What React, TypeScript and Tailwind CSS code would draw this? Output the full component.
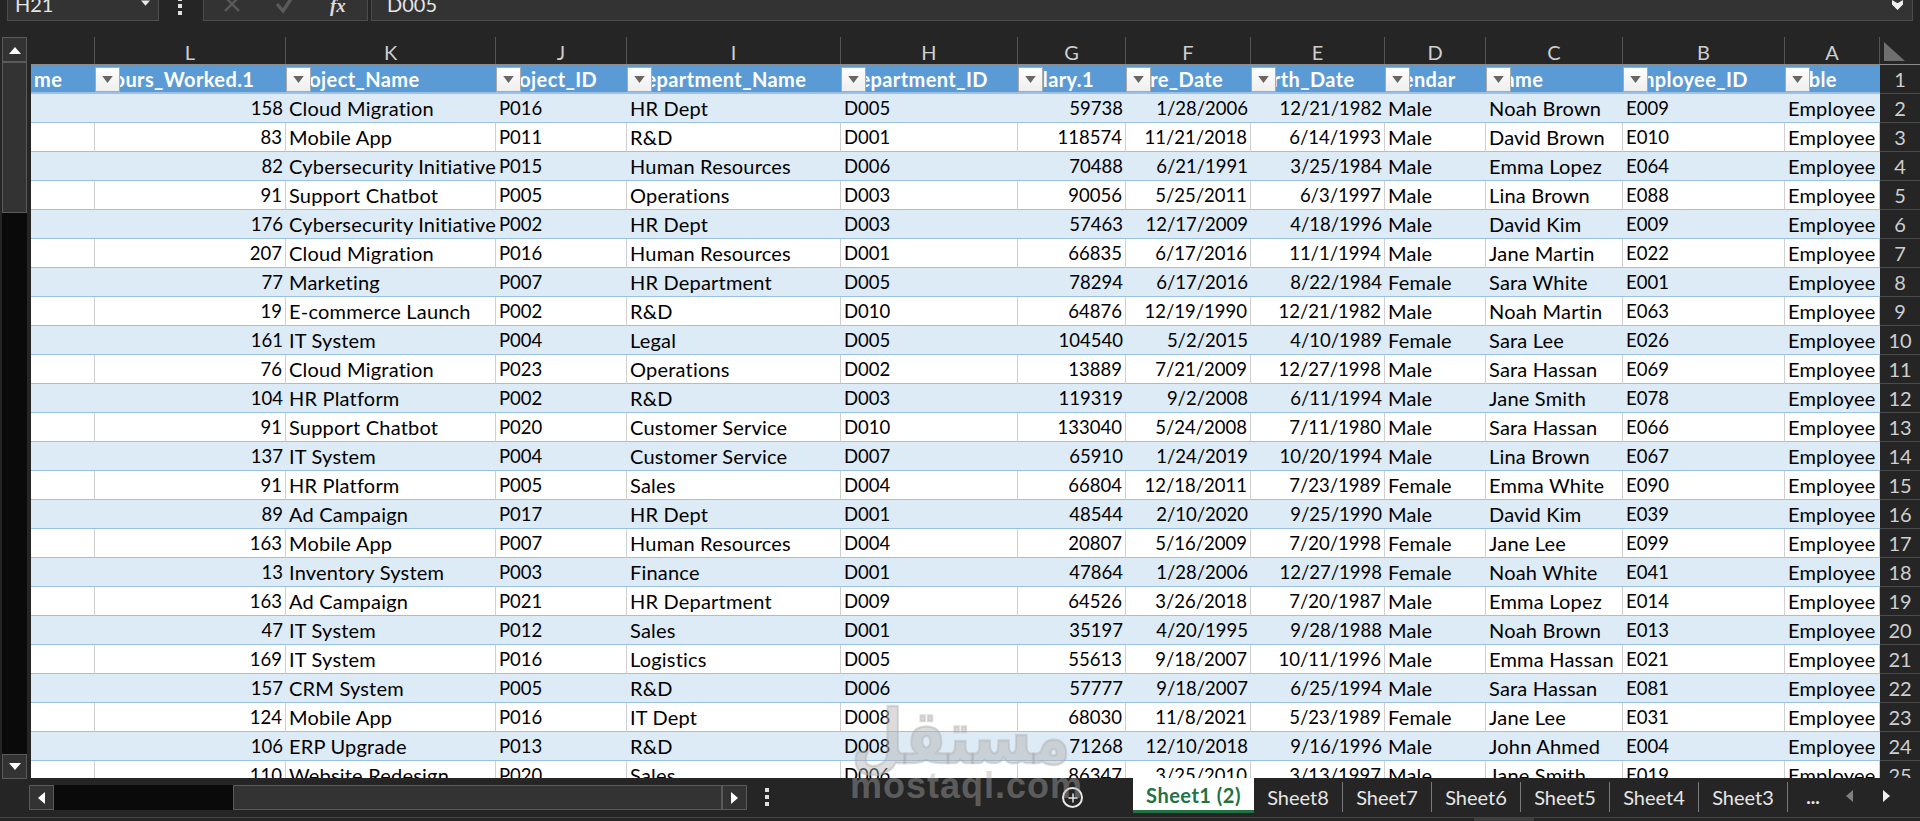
import { Plus } from "lucide-react";

const COLS = [
  { letter: "", title: "me", w: "w-[64px]", filter: false },
  { letter: "L", title: "Hours_Worked.1", w: "w-[191px]", filter: true },
  { letter: "K", title: "Project_Name", w: "w-[210px]", filter: true },
  { letter: "J", title: "Project_ID", w: "w-[131px]", filter: true },
  { letter: "I", title: "Department_Name", w: "w-[214px]", filter: true },
  { letter: "H", title: "Department_ID", w: "w-[177px]", filter: true },
  { letter: "G", title: "Salary.1", w: "w-[108px]", filter: true },
  { letter: "F", title: "Hire_Date", w: "w-[125px]", filter: true },
  { letter: "E", title: "Birth_Date", w: "w-[134px]", filter: true },
  { letter: "D", title: "Gendar", w: "w-[101px]", filter: true },
  { letter: "C", title: "Name", w: "w-[137px]", filter: true },
  { letter: "B", title: "Employee_ID", w: "w-[162px]", filter: true },
  { letter: "A", title: "Table", w: "w-[95px]", filter: true },
];

// right aligned columns: the numbers and the dates
const RIGHT = [1, 6, 7, 8];
// columns holding words, these run a bit wider than the digit columns
const WORDS = [2, 4, 9, 10, 12];

const ROWS = `|158|Cloud Migration|P016|HR Dept|D005|59738|1/28/2006|12/21/1982|Male|Noah Brown|E009|Employee
|83|Mobile App|P011|R&D|D001|118574|11/21/2018|6/14/1993|Male|David Brown|E010|Employee
|82|Cybersecurity Initiative|P015|Human Resources|D006|70488|6/21/1991|3/25/1984|Male|Emma Lopez|E064|Employee
|91|Support Chatbot|P005|Operations|D003|90056|5/25/2011|6/3/1997|Male|Lina Brown|E088|Employee
|176|Cybersecurity Initiative|P002|HR Dept|D003|57463|12/17/2009|4/18/1996|Male|David Kim|E009|Employee
|207|Cloud Migration|P016|Human Resources|D001|66835|6/17/2016|11/1/1994|Male|Jane Martin|E022|Employee
|77|Marketing|P007|HR Department|D005|78294|6/17/2016|8/22/1984|Female|Sara White|E001|Employee
|19|E-commerce Launch|P002|R&D|D010|64876|12/19/1990|12/21/1982|Male|Noah Martin|E063|Employee
|161|IT System|P004|Legal|D005|104540|5/2/2015|4/10/1989|Female|Sara Lee|E026|Employee
|76|Cloud Migration|P023|Operations|D002|13889|7/21/2009|12/27/1998|Male|Sara Hassan|E069|Employee
|104|HR Platform|P002|R&D|D003|119319|9/2/2008|6/11/1994|Male|Jane Smith|E078|Employee
|91|Support Chatbot|P020|Customer Service|D010|133040|5/24/2008|7/11/1980|Male|Sara Hassan|E066|Employee
|137|IT System|P004|Customer Service|D007|65910|1/24/2019|10/20/1994|Male|Lina Brown|E067|Employee
|91|HR Platform|P005|Sales|D004|66804|12/18/2011|7/23/1989|Female|Emma White|E090|Employee
|89|Ad Campaign|P017|HR Dept|D001|48544|2/10/2020|9/25/1990|Male|David Kim|E039|Employee
|163|Mobile App|P007|Human Resources|D004|20807|5/16/2009|7/20/1998|Female|Jane Lee|E099|Employee
|13|Inventory System|P003|Finance|D001|47864|1/28/2006|12/27/1998|Female|Noah White|E041|Employee
|163|Ad Campaign|P021|HR Department|D009|64526|3/26/2018|7/20/1987|Male|Emma Lopez|E014|Employee
|47|IT System|P012|Sales|D001|35197|4/20/1995|9/28/1988|Male|Noah Brown|E013|Employee
|169|IT System|P016|Logistics|D005|55613|9/18/2007|10/11/1996|Male|Emma Hassan|E021|Employee
|157|CRM System|P005|R&D|D006|57777|9/18/2007|6/25/1994|Male|Sara Hassan|E081|Employee
|124|Mobile App|P016|IT Dept|D008|68030|11/8/2021|5/23/1989|Female|Jane Lee|E031|Employee
|106|ERP Upgrade|P013|R&D|D008|71268|12/10/2018|9/16/1996|Male|John Ahmed|E004|Employee
|110|Website Redesign|P020|Sales|D006|86347|3/25/2010|3/13/1997|Male|Jane Smith|E019|Employee`
  .split("\n")
  .map((r) => r.split("|"));

const TABS = ["Sheet8", "Sheet7", "Sheet6", "Sheet5", "Sheet4", "Sheet3"];

const Tri = ({ dir, className }: { dir: "up" | "down" | "left" | "right"; className: string }) => {
  const pts = { up: "0,10 6,3 12,10", down: "0,2 12,2 6,9", left: "9,0 9,12 2,6", right: "2,0 2,12 9,6" }[dir];
  return (
    <svg viewBox="0 0 12 12" className={className} fill="currentColor">
      <polygon points={pts} />
    </svg>
  );
};

const Dots = ({ className }: { className: string }) => (
  <div className={`flex flex-col gap-[3px] w-[4px] ${className}`}>
    <span className="block w-[4px] h-[4px] bg-[#e0e0e0]" />
    <span className="block w-[4px] h-[4px] bg-[#e0e0e0]" />
    <span className="block w-[4px] h-[4px] bg-[#e0e0e0]" />
  </div>
);

const FilterBtn = () => (
  <div className="absolute left-0 top-[2px] w-[25px] h-[25px] border border-[#a9a9a9] bg-gradient-to-b from-white to-[#eeeeee] flex items-center justify-center">
    <svg viewBox="0 0 12 8" className="w-[11px] h-[7px] text-[#6b6663]" fill="currentColor">
      <polygon points="0,0 12,0 6,8" />
    </svg>
  </div>
);

export default function App() {
  return (
    <div
      className="relative w-[1920px] h-[821px] overflow-hidden bg-[#252525] flex flex-col"
      style={{ fontFamily: "Lato, 'Liberation Sans', sans-serif" }}
    >
      {/* formula bar */}
      <div className="h-[37px] shrink-0 flex items-start">
        <div className="ml-[7px] w-[152px] h-[21px] bg-[#333333] border-b border-r border-l border-[#4d4d4d] flex justify-between pl-[7px] pr-[8px] overflow-hidden">
          <span className="text-[#e4e4e4] text-[20px] leading-[9px]">H21</span>
          <Tri dir="down" className="w-[9px] h-[9px] mt-[-1px] text-[#e8e8e8]" />
        </div>
        <Dots className="ml-[19px] mt-[-3px]" />
        <div className="ml-[21px] w-[165px] h-[21px] bg-[#333333] border-b border-r border-l border-[#4d4d4d] flex overflow-hidden text-[#5a5a5a]">
          <svg viewBox="0 0 20 20" className="w-[20px] h-[20px] ml-[18px] mt-[-6px]" stroke="currentColor" strokeWidth="2.4" fill="none">
            <path d="M3 3 L17 17 M17 3 L3 17" />
          </svg>
          <svg viewBox="0 0 20 20" className="w-[20px] h-[20px] ml-[33px] mt-[-6px]" stroke="currentColor" strokeWidth="3.4" fill="none">
            <path d="M2 10 L8 17 L18 2" />
          </svg>
          <span
            className="ml-[35px] text-[#dcdcdc] italic font-bold text-[19px] leading-[11px]"
            style={{ fontFamily: "'Liberation Serif', serif" }}
          >
            fx
          </span>
        </div>
        <div className="ml-[3px] w-[1542px] h-[21px] bg-[#333333] border-b border-r border-l border-[#4d4d4d] flex justify-between pl-[15px] pr-[9px] overflow-hidden">
          <span className="text-[#e4e4e4] text-[20px] leading-[9px]">D005</span>
          <svg viewBox="0 0 10 9" className="w-[11px] h-[10px] text-[#f0f0f0]" fill="currentColor">
            <polygon points="0,0 5,3 10,0 10,4 5,9 0,4" />
          </svg>
        </div>
      </div>

      <div className="flex flex-1 min-h-0">
        {/* vertical scrollbar */}
        <div className="w-[31px] shrink-0 pl-[2px] h-[742px] flex">
          <div className="w-[25px] h-full flex flex-col bg-[#0a0a0a]">
            <div className="h-[25px] bg-[#333333] border border-[#5a5a5a] flex items-center justify-center">
              <Tri dir="up" className="w-[12px] h-[12px] text-white" />
            </div>
            <div className="h-[151px] bg-[#333333] border border-[#5a5a5a]" />
            <div className="flex-1" />
            <div className="h-[25px] bg-[#333333] border border-[#5a5a5a] flex items-center justify-center">
              <Tri dir="down" className="w-[12px] h-[12px] text-white" />
            </div>
          </div>
        </div>

        <div className="flex-1 min-w-0 flex flex-col">
          {/* column letters */}
          <div className="h-[27px] shrink-0 flex">
            {COLS.map((c, i) => (
              <div
                key={i}
                className={`${c.w} shrink-0 border-r border-[#555555] text-center text-[#cfcfcf] text-[20px] leading-[30px]`}
              >
                {c.letter}
              </div>
            ))}
            <div className="relative w-[40px] shrink-0">
              <svg viewBox="0 0 21 19" className="w-[21px] h-[19px] ml-[4px] mt-[5px] text-[#6f6f6f]" fill="currentColor">
                <polygon points="0,0 21,19 0,19" />
              </svg>
            </div>
          </div>

          {/* sheet */}
          <div className="h-[714px] overflow-hidden border-t border-[#8c8c8c] text-[19px]">
            <div className="flex h-[29px] text-white font-bold text-[20px] tracking-[0.4px]">
              {COLS.map((c, i) => (
                <div
                  key={i}
                  className={`relative ${c.w} shrink-0 bg-[#5b9bd5] border-b-2 border-[#9bc2e6] pl-[3px] leading-[29px] overflow-hidden whitespace-nowrap`}
                >
                  {c.title}
                  {c.filter && <FilterBtn />}
                </div>
              ))}
              <div className="w-[40px] shrink-0 border-b border-[#4a4a4a] text-center text-[#cfcfcf] font-normal tracking-normal leading-[28px]">
                1
              </div>
            </div>
            {ROWS.map((row, r) => {
              const band = r % 2 === 0;
              return (
                <div key={r} className="flex h-[29px] text-black">
                  {row.map((cell, i) => (
                    <div
                      key={i}
                      className={`${COLS[i].w} shrink-0 border-b border-[#9bc2e6] whitespace-nowrap overflow-hidden ${
                        band ? "bg-[#ddebf7]" : "bg-white border-r border-r-[#d0d0d0]"
                      } ${RIGHT.includes(i) ? "text-right pr-[3px]" : "pl-[3px]"} ${
                        WORDS.includes(i) ? "text-[20px] tracking-[0.2px] leading-[28px]" : "text-[18.5px] leading-[29px]"
                      }`}
                    >
                      {cell}
                    </div>
                  ))}
                  <div className="w-[40px] shrink-0 border-b border-[#4a4a4a] text-center text-[#cfcfcf] text-[20px] leading-[28px]">
                    {r + 2}
                  </div>
                </div>
              );
            })}
          </div>
        </div>
      </div>

      {/* sheet tabs and horizontal scrollbar */}
      <div className="absolute left-0 right-0 bottom-0 h-[43px] flex flex-col">
        <div className="h-[39px] flex items-start">
          <div className="ml-[29px] mt-[7px] flex h-[25px] w-[718px] bg-[#0a0a0a]">
            <div className="w-[25px] bg-[#333333] border border-[#5a5a5a] flex items-center justify-center">
              <Tri dir="left" className="w-[12px] h-[12px] text-white" />
            </div>
            <div className="w-[179px]" />
            <div className="flex-1 bg-[#333333] border border-[#5a5a5a]" />
            <div className="w-[25px] bg-[#333333] border border-[#5a5a5a] flex items-center justify-center">
              <Tri dir="right" className="w-[12px] h-[12px] text-white" />
            </div>
          </div>
          <Dots className="ml-[18px] mt-[10px]" />
          <div className="ml-[293px] mt-[9px] w-[21px] h-[21px] rounded-full border-2 border-[#e8e8e8] flex items-center justify-center">
            <Plus className="w-[14px] h-[14px] text-[#e8e8e8]" strokeWidth={2.5} />
          </div>
          <div className="ml-[50px] w-[121px] h-[35px] bg-white border-b-[3px] border-[#217346] text-center text-[#217346] font-bold text-[20px] tracking-[0.5px] leading-[35px]">
            Sheet1 (2)
          </div>
          {TABS.map((t) => (
            <div key={t} className="mt-[4px] w-[89px] h-[30px] flex">
              <div className="flex-1 text-center text-[#e6e6e6] text-[20px] leading-[30px]">{t}</div>
              <div className="w-px bg-[#7a7a7a]" />
            </div>
          ))}
          <div className="mt-[4px] w-[50px] text-center text-[#e6e6e6] text-[19px] font-bold leading-[30px]">...</div>
          <Tri dir="left" className="mt-[12px] ml-[6px] w-[12px] h-[12px] text-[#7f7f7f]" />
          <Tri dir="right" className="mt-[12px] ml-[25px] w-[12px] h-[12px] text-[#f0f0f0]" />
        </div>
        <div className="flex-1 border-t border-[#444444] flex justify-end">
          <div className="mr-[386px] w-[60px] bg-[#3d3d3d]" />
        </div>
      </div>

      {/* watermark */}
      <div className="absolute left-[850px] top-[692px] w-[222px] text-center pointer-events-none text-[rgba(173,173,173,0.43)] font-bold">
        <div
          dir="rtl"
          className="text-[60px] leading-[80px] scale-y-[1.25] translate-y-[5px] [-webkit-text-stroke:2px_rgba(173,173,173,0.43)]"
          style={{ fontFamily: "'DejaVu Sans', sans-serif" }}
        >
          مستقل
        </div>
        <div className="text-[36px] leading-[30px] tracking-[1px] mt-[-1px]" style={{ fontFamily: "'Liberation Sans', sans-serif" }}>
          mostaql.com
        </div>
      </div>
    </div>
  );
}
